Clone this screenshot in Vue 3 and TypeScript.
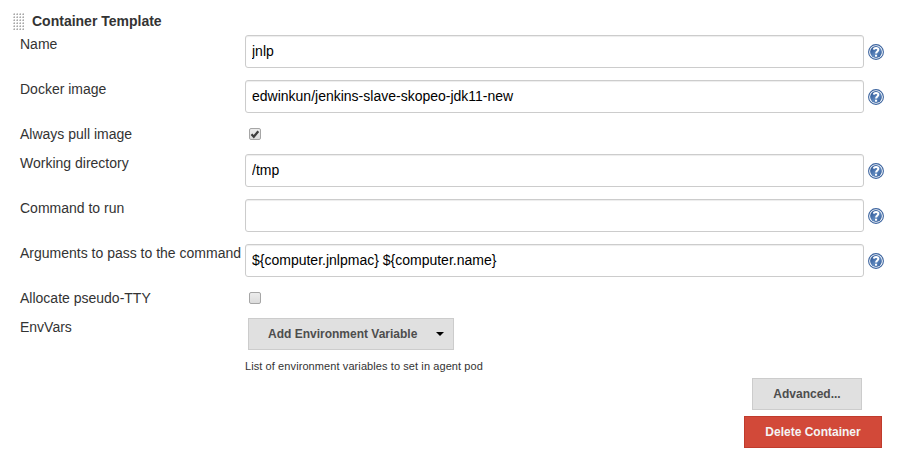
<script setup lang="ts">
import { ref } from 'vue'

interface Field {
  label: string
  kind: 'text' | 'check' | 'env'
  value?: string
  checked?: boolean
}

const fields = ref<Field[]>([
  { label: 'Name', kind: 'text', value: 'jnlp' },
  { label: 'Docker image', kind: 'text', value: 'edwinkun/jenkins-slave-skopeo-jdk11-new' },
  { label: 'Always pull image', kind: 'check', checked: true },
  { label: 'Working directory', kind: 'text', value: '/tmp' },
  { label: 'Command to run', kind: 'text', value: '' },
  { label: 'Arguments to pass to the command', kind: 'text', value: '${computer.jnlpmac} ${computer.name}' },
  { label: 'Allocate pseudo-TTY', kind: 'check', checked: false },
  { label: 'EnvVars', kind: 'env' },
])
</script>

<template>
  <main class="template">
    <header class="heading">
      <svg class="handle" viewBox="0 0 12 18" shape-rendering="crispEdges">
        <defs>
          <pattern id="grip" width="3" height="3" patternUnits="userSpaceOnUse">
            <rect x="1" y="0" width="1" height="1" fill="#c8c8c8" />
            <rect x="0" y="1" width="1" height="1" fill="#c8c8c8" />
            <rect x="1" y="1" width="1" height="1" fill="#a8a8a8" />
            <rect x="0" y="0" width="1" height="1" fill="#ececec" />
          </pattern>
        </defs>
        <rect width="12" height="18" fill="url(#grip)" />
      </svg>
      <h1>Container Template</h1>
    </header>

    <div v-for="field in fields" :key="field.label" class="row" :class="field.kind">
      <label class="label"><span>{{ field.label }}</span></label>
      <template v-if="field.kind === 'text'">
        <input v-model="field.value" class="input" type="text" spellcheck="false" />
        <svg class="help" viewBox="0 0 16 16">
          <defs>
            <linearGradient id="help-fill" x1="0" y1="0" x2="1" y2="1">
              <stop offset="0" stop-color="#1f4a8c" />
              <stop offset="0.55" stop-color="#5f88be" />
              <stop offset="1" stop-color="#2a5593" />
            </linearGradient>
          </defs>
          <circle cx="8" cy="8" r="7.4" fill="#fff" stroke="#3c649f" stroke-width="1.1" />
          <circle cx="8" cy="8" r="5.9" fill="url(#help-fill)" />
          <path d="M5.8 5.6C5.9 3.4 10.3 3.3 10.3 5.8C10.3 7.6 8.1 7.4 8.1 9.6" fill="none" stroke="#fff" stroke-width="2" />
          <rect x="7" y="10.7" width="2.1" height="2" fill="#fff" />
        </svg>
      </template>
      <button v-else-if="field.kind === 'check'" class="box" type="button" @click="field.checked = !field.checked">
        <svg v-if="field.checked" viewBox="0 0 10 10">
          <path d="M1.5 5.2L3.8 7.7L8.3 2.2" fill="none" stroke="#3d3d3d" stroke-width="2.3" />
        </svg>
      </button>
      <div v-else class="env-body">
        <button class="btn add" type="button">
          <span>Add Environment Variable</span>
          <svg class="caret" viewBox="0 0 8 4"><path d="M0 0H8L4 4Z" fill="#000" /></svg>
        </button>
        <p class="hint"><span>List of environment variables to set in agent pod</span></p>
      </div>
    </div>

    <footer class="actions">
      <button class="btn advanced" type="button">Advanced...</button>
      <button class="btn delete" type="button">Delete Container</button>
    </footer>
  </main>
</template>

<style>
body {
  margin: 0;
  background: #fff;
}
</style>

<style scoped>
.template {
  box-sizing: border-box;
  width: 908px;
  height: 461px;
  padding: 12px 24px 0 13px;
  font-family: "Liberation Sans", Arial, sans-serif;
  font-size: 14px;
  color: #333;
}
.heading {
  display: flex;
  height: 23px;
}
.handle {
  width: 12px;
  height: 18px;
  margin: 1px 7px 0 0;
}
h1 {
  margin: 0;
  font-size: 14px;
  line-height: 18px;
  font-weight: bold;
}
.row {
  display: flex;
  align-items: flex-start;
  height: 45px;
  padding-left: 7px;
}
.row.check {
  height: 29px;
}
.row.env {
  height: 60px;
}
.label {
  flex: none;
  width: 225px;
  line-height: 18px;
  white-space: nowrap;
}
.input {
  box-sizing: border-box;
  width: 619px;
  height: 33px;
  margin: 0;
  padding: 0 6px 1px;
  border: 1px solid #ccc;
  border-radius: 3px;
  box-shadow: inset 0 1px 1px rgba(0, 0, 0, 0.075);
  font: inherit;
  color: #000;
  outline: none;
}
.help {
  width: 16px;
  height: 16px;
  margin: 9px 0 0 4px;
}
.box {
  box-sizing: border-box;
  width: 12px;
  height: 12px;
  margin: 3px 0 0 4px;
  padding: 0;
  border: 1px solid #a6a6a6;
  border-radius: 2px;
  background: linear-gradient(#ececec, #dcdcdc);
}
.box svg {
  display: block;
  width: 10px;
  height: 10px;
}
.btn {
  box-sizing: border-box;
  height: 32px;
  padding: 0;
  border: 1px solid #ccc;
  border-radius: 0;
  background: #e0e0e0;
  color: #4d4d4d;
  font: bold 12px/30px "Liberation Sans", Arial, sans-serif;
  text-align: center;
}
.add {
  display: flex;
  align-items: center;
  justify-content: space-between;
  width: 206px;
  margin-left: 3px;
  padding: 0 9px 0 19px;
}
.caret {
  width: 8px;
  height: 4px;
}
.hint {
  margin: 9px 0 0;
  font-size: 11px;
  line-height: 14px;
  letter-spacing: 0.09px;
}
.actions {
  display: flex;
  flex-direction: column;
  align-items: flex-end;
  gap: 6px;
  padding-right: 2px;
}
.advanced {
  width: 110px;
  margin-right: 20px;
}
.delete {
  width: 138px;
  border-color: #c03b2c;
  background: #d24939;
  color: #f4f4f4;
}
</style>
